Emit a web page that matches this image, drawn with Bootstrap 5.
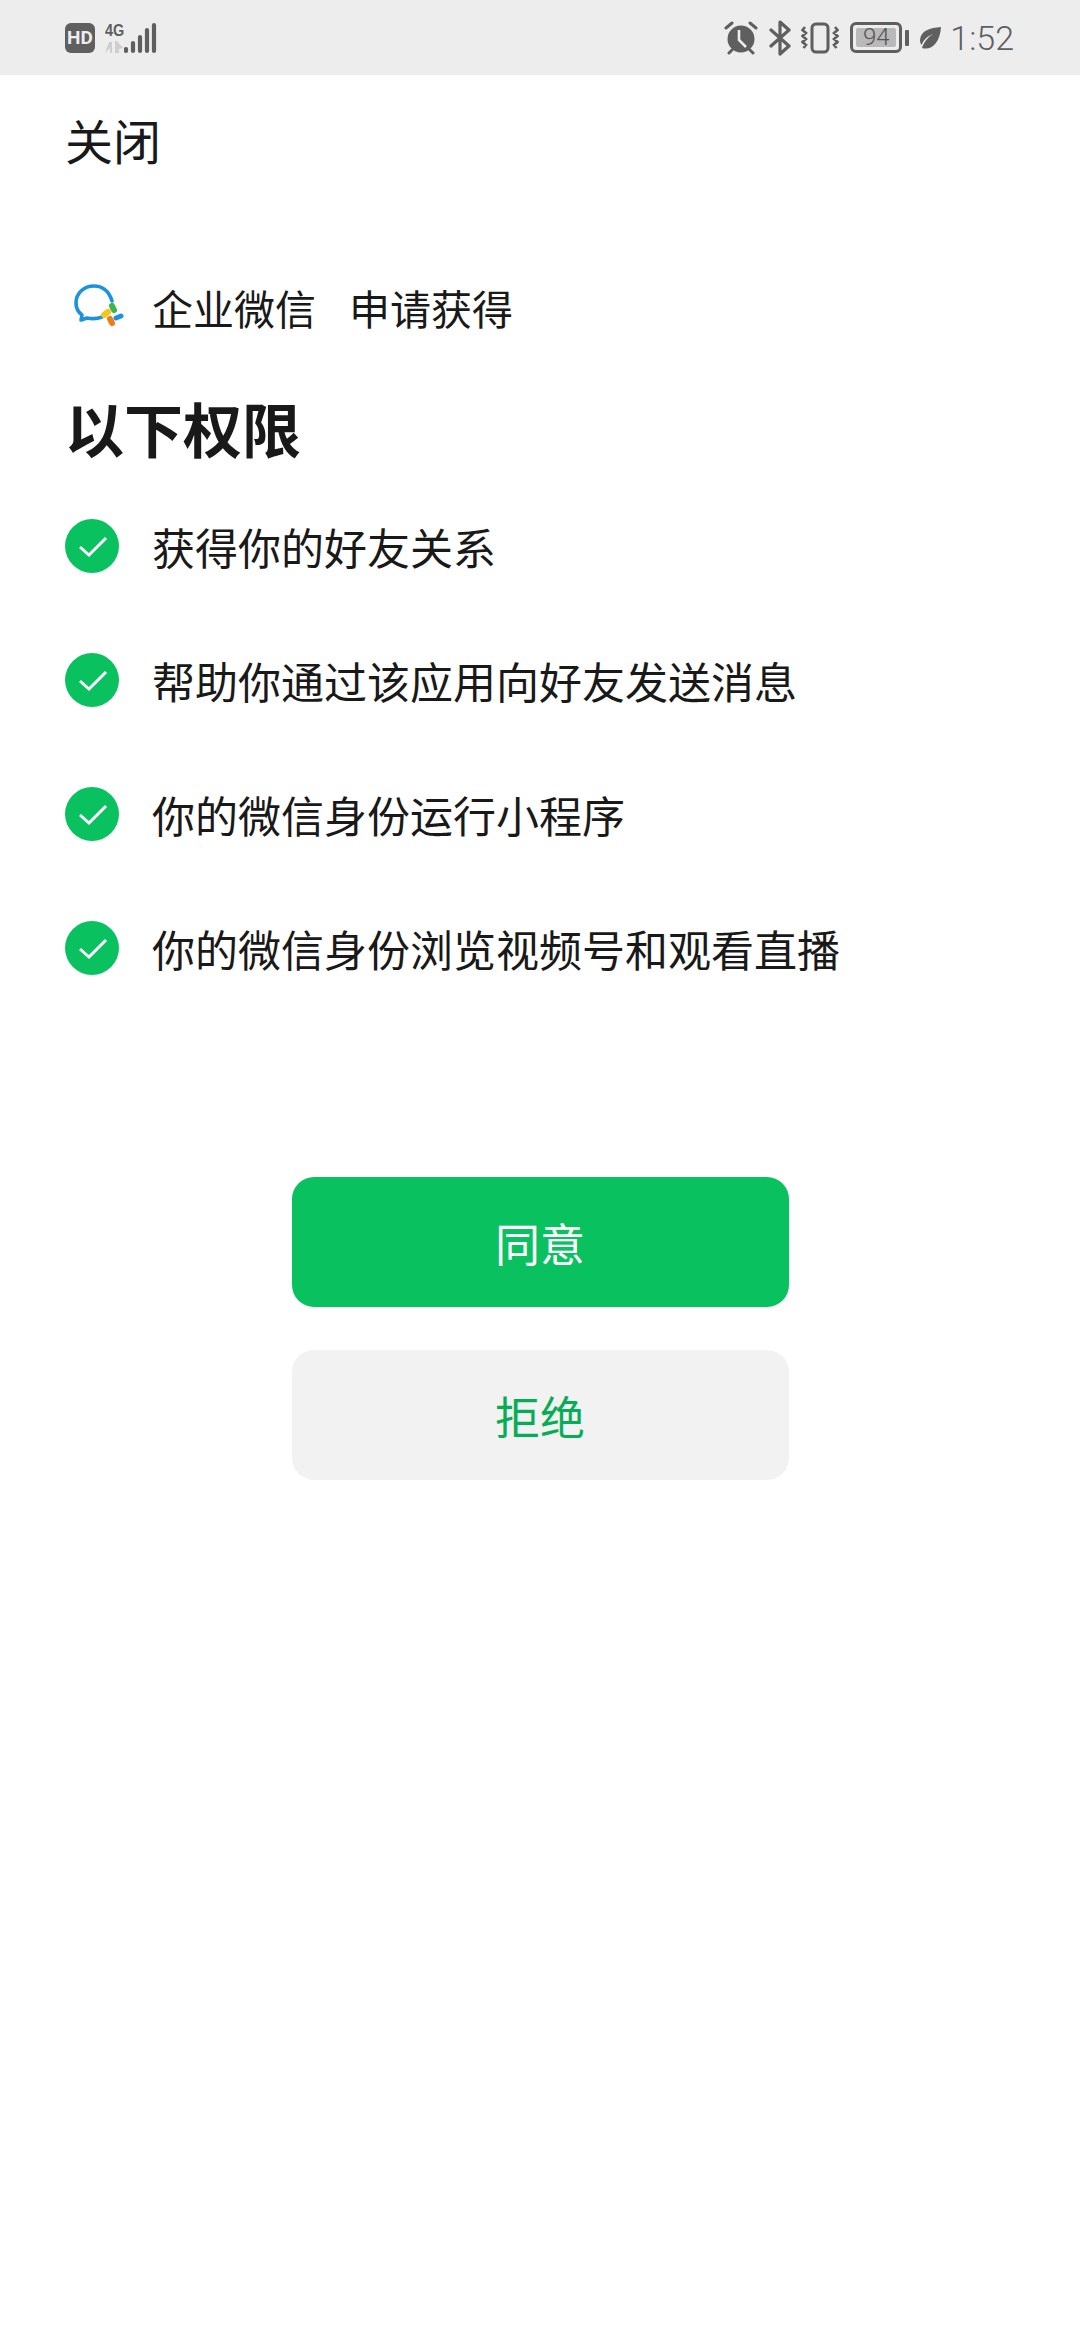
<!DOCTYPE html>
<html lang="zh-CN">

<head>
    <meta charset="UTF-8">
    <meta name="viewport" content="width=device-width, initial-scale=1.0">
    <title>授权</title>
    <link href="https://cdn.jsdelivr.net/npm/bootstrap@5.3.0/dist/css/bootstrap.min.css" rel="stylesheet">
    <style>
        body { background: #fff; color: #191919; font-family: "Noto Sans CJK SC", "Liberation Sans", sans-serif; }
        .status-bar { height: 75px; background: #ededed; padding: 0 66px 0 65px; color: #5f5f5f; font-family: Roboto, "Liberation Sans", sans-serif; }
        .hd-tag { width: 30px; height: 30px; margin-right: 10px; background: #5f5f5f; color: #ededed; border-radius: 6px; font-size: 19px; font-weight: 700; line-height: 30px; text-align: center; }
        .net-tag { width: 19px; height: 31px; line-height: 1; }
        .net-4g { font-size: 17px; font-weight: 700; height: 19px; line-height: 17px; font-family: "Liberation Sans", sans-serif; transform: scaleX(.85); transform-origin: left; }
        .status-time { font-size: 34px; line-height: 1; margin-left: 9px; font-weight: 300; }
        .batt-wrap { width: 52px; height: 31px; border: 3px solid #5f5f5f; border-radius: 6px; padding: 3px; margin-left: 11px; }
        .batt-fill { background: #b9b9b9; border-radius: 2px; font-size: 24px; line-height: 19px; height: 19px; text-align: center; color: #555; font-weight: 300; }
        .batt-cap { width: 4px; height: 16px; background: #5f5f5f; border-radius: 1px; margin-left: 3px; margin-right: 10px; }
        .page-body { padding: 0 65px; }
        .close-link { font-size: 48px; line-height: 64px; margin-top: 32px; color: #191919; }
        .app-row { margin-top: 104px; height: 64px; }
        .app-row span { font-size: 41px; line-height: 64px; }
        .app-logo { width: 60px; height: 50px; margin: 0 18px 0 9px; flex: none; }
        .app-name { margin-right: 33px; }
        .perm-title { font-size: 59px; font-weight: 700; line-height: 80px; margin: 49px 0 0; }
        .perm-list { margin-top: 11px; }
        .perm-item { height: 134px; margin: 0; }
        .perm-item span { font-size: 43px; line-height: 60px; }
        .perm-check { width: 54px; height: 54px; margin-right: 33px; flex: none; }
        .btn-area { margin-top: 162px; gap: 43px; }
        .act-btn { width: 497px; height: 130px; border: 0; border-radius: 22px; font-size: 45px; line-height: 1; padding: 0; }
        .act-ok, .act-ok:hover { background: #0ac160; color: #fff; }
        .act-no, .act-no:hover { background: #f1f2f1; color: #07ad56; }
    </style>
</head>

<body>
    <!-- 状态栏 -->
    <div class="status-bar d-flex align-items-center justify-content-between">
        <div class="d-flex align-items-center">
            <div class="hd-tag">HD</div>
            <div class="net-tag">
                <div class="net-4g">4G</div>
                <svg class="d-block" width="18" height="12" viewBox="0 0 18 12"><path d="M0 12 4 1h3v11H5V7zM10 0h2l6 7-4 1v4h-4z" fill="#cfcfcf"/></svg>
            </div>
            <svg width="34" height="32" viewBox="0 0 34 32">
                <path d="M2 29v-2M9 29V21M16 29V15M23 29V8M30 29V3" stroke="#5f5f5f" stroke-width="4.2" stroke-linecap="round"/>
            </svg>
        </div>
        <div class="d-flex align-items-center">
            <svg width="34" height="34" viewBox="0 0 34 34">
                <circle cx="17" cy="18" r="13.5" fill="#5f5f5f"/>
                <path d="M15 9v10l7 7" fill="none" stroke="#ededed" stroke-width="2.6"/>
                <path d="M2 7l6-5M32 7l-6-5M5 32l3-3M29 32l-3-3" stroke="#5f5f5f" stroke-width="3" stroke-linecap="round"/>
            </svg>
            <svg width="24" height="36" viewBox="0 0 24 36" style="margin-left:10px">
                <path d="M3 10l18 16-9 8V2l9 8L3 26" fill="none" stroke="#5f5f5f" stroke-width="3.2" stroke-linejoin="round" stroke-linecap="round"/>
            </svg>
            <svg width="38" height="34" viewBox="0 0 38 34" style="margin-left:9px">
                <rect x="11" y="3" width="16" height="28" rx="4" fill="none" stroke="#5f5f5f" stroke-width="3"/>
                <path d="M4 6 1.500 9 5 12 1.500 15 5 18 1.500 21 5 24 2.500 27M34 6l2.500 3L33 12l3.500 3L33 18l3.500 3L33 24l2.500 3" fill="none" stroke="#5f5f5f" stroke-width="2.6"/>
            </svg>
            <div class="batt-wrap">
                <div class="batt-fill">94</div>
            </div>
            <div class="batt-cap"></div>
            <svg width="22" height="22" viewBox="0 0 22 22">
                <path d="M22 0C11 1 2 3 1 13c0 2 .5 3.500 1.500 5C5 12 9 9 14 7 9 10 5 15 3 21c9 3 18-5 19-21z" fill="#5f5f5f"/>
            </svg>
            <div class="status-time">1:52</div>
        </div>
    </div>

    <div class="page-body">
        <div class="close-link">关闭</div>

        <div class="app-row d-flex align-items-center">
            <svg class="app-logo" viewBox="0 0 60 50">
                <path d="M38 19C35 9 28 4 20 4 10 4 2 11 2 21c0 5 2 9 6 12l-1 5 6-2c5 1 10 1 15-1" fill="none" stroke="#1a92e0" stroke-width="3.600" stroke-linecap="round" stroke-linejoin="round"/>
                <path d="M38 24l2 4" stroke="#3cb54a" stroke-width="6" stroke-linecap="round"/>
                <path d="M47 34l-5 2" stroke="#1a92e0" stroke-width="5" stroke-linecap="round"/>
                <path d="M38 41l-2-4" stroke="#ef7d1a" stroke-width="6" stroke-linecap="round"/>
                <path d="M30 33l4-3" stroke="#f5c518" stroke-width="6" stroke-linecap="round"/>
            </svg>
            <span class="app-name">企业微信</span><span>申请获得</span>
        </div>

        <h1 class="perm-title">以下权限</h1>

        <ul class="perm-list list-unstyled mb-0">
            <li class="perm-item d-flex align-items-center">
                <svg class="perm-check" viewBox="0 0 54 54"><circle cx="27" cy="27" r="27" fill="#0ac160"/><path d="M15 28l9 8 17-17" fill="none" stroke="#fff" stroke-width="3"/></svg>
                <span>获得你的好友关系</span>
            </li>
            <li class="perm-item d-flex align-items-center">
                <svg class="perm-check" viewBox="0 0 54 54"><circle cx="27" cy="27" r="27" fill="#0ac160"/><path d="M15 28l9 8 17-17" fill="none" stroke="#fff" stroke-width="3"/></svg>
                <span>帮助你通过该应用向好友发送消息</span>
            </li>
            <li class="perm-item d-flex align-items-center">
                <svg class="perm-check" viewBox="0 0 54 54"><circle cx="27" cy="27" r="27" fill="#0ac160"/><path d="M15 28l9 8 17-17" fill="none" stroke="#fff" stroke-width="3"/></svg>
                <span>你的微信身份运行小程序</span>
            </li>
            <li class="perm-item d-flex align-items-center">
                <svg class="perm-check" viewBox="0 0 54 54"><circle cx="27" cy="27" r="27" fill="#0ac160"/><path d="M15 28l9 8 17-17" fill="none" stroke="#fff" stroke-width="3"/></svg>
                <span>你的微信身份浏览视频号和观看直播</span>
            </li>
        </ul>

        <div class="btn-area d-flex flex-column align-items-center">
            <button class="btn act-btn act-ok" type="button">同意</button>
            <button class="btn act-btn act-no" type="button">拒绝</button>
        </div>
    </div>

    <script src="https://cdn.jsdelivr.net/npm/bootstrap@5.3.0/dist/js/bootstrap.bundle.min.js"></script>
</body>

</html>
